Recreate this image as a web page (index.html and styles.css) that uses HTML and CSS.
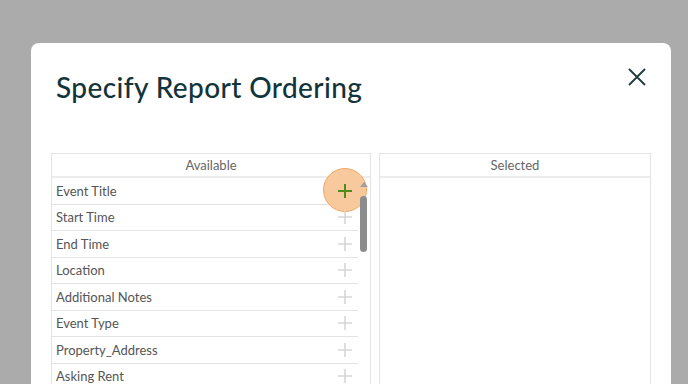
FILE: index.html
```html
<!DOCTYPE html>
<html lang="en">
<head>
  <meta charset="UTF-8" />
  <title>Specify Report Ordering</title>
  <link rel="stylesheet" href="styles.css">
</head>
<body>

<div class="modal">
  <div class="modal-head">
    <h1>Specify Report Ordering</h1>
    <button class="close" aria-label="Close">
      <svg width="18" height="18" viewBox="0 0 18 18"><path d="M1 1L17 17M17 1L1 17" stroke="#1f3a3d" stroke-width="1.8" fill="none"/></svg>
    </button>
  </div>

  <div class="lists">
    <div class="panel available">
      <div class="panel-head">Available</div>
      <div class="panel-body">
        <ul class="items">
          <li><span>Event Title</span><span class="add active"><span class="ring"></span><svg width="14" height="14" viewBox="0 0 14 14"><path d="M7 0V14M0 7H14" stroke="#4f8a1c" stroke-width="2"/></svg></span></li>
          <li><span>Start Time</span><span class="add"><svg width="14" height="14" viewBox="0 0 14 14"><path d="M7 0V14M0 7H14" stroke="#d6d6d6" stroke-width="1.6"/></svg></span></li>
          <li><span>End Time</span><span class="add"><svg width="14" height="14" viewBox="0 0 14 14"><path d="M7 0V14M0 7H14" stroke="#d6d6d6" stroke-width="1.6"/></svg></span></li>
          <li><span>Location</span><span class="add"><svg width="14" height="14" viewBox="0 0 14 14"><path d="M7 0V14M0 7H14" stroke="#d6d6d6" stroke-width="1.6"/></svg></span></li>
          <li><span>Additional Notes</span><span class="add"><svg width="14" height="14" viewBox="0 0 14 14"><path d="M7 0V14M0 7H14" stroke="#d6d6d6" stroke-width="1.6"/></svg></span></li>
          <li><span>Event Type</span><span class="add"><svg width="14" height="14" viewBox="0 0 14 14"><path d="M7 0V14M0 7H14" stroke="#d6d6d6" stroke-width="1.6"/></svg></span></li>
          <li><span>Property_Address</span><span class="add"><svg width="14" height="14" viewBox="0 0 14 14"><path d="M7 0V14M0 7H14" stroke="#d6d6d6" stroke-width="1.6"/></svg></span></li>
          <li><span>Asking Rent</span><span class="add"><svg width="14" height="14" viewBox="0 0 14 14"><path d="M7 0V14M0 7H14" stroke="#d6d6d6" stroke-width="1.6"/></svg></span></li>
        </ul>
        <div class="scrollbar">
          <span class="arrow"></span>
          <span class="thumb"></span>
        </div>
      </div>
    </div>

    <div class="panel selected">
      <div class="panel-head">Selected</div>
      <div class="panel-body"></div>
    </div>
  </div>
</div>

</body>
</html>
```

FILE: styles.css
```css
html, body {
  margin: 0;
  height: 100%;
  overflow: hidden;
}
body {
  background: #ababab;
  font-family: Lato, "Liberation Sans", sans-serif;
  padding: 43px 17px 0 31px;
}
.modal {
  width: 640px;
  height: 400px;
  background: #fff;
  border-radius: 8px 8px 0 0;
  box-sizing: border-box;
  padding: 0 20px;
}
.modal-head {
  display: flex;
  justify-content: space-between;
  align-items: flex-start;
  height: 110px;
}
.modal-head h1 {
  margin: 27px 0 0 5px;
  font-family: Lato, sans-serif;
  font-weight: 500;
  font-size: 28px;
  letter-spacing: 0.4px;
  color: #12343a;
}
.close {
  border: none;
  background: none;
  padding: 0;
  margin: 25px 5px 0 0;
  cursor: pointer;
}
.lists {
  display: flex;
  gap: 8px;
}
.panel {
  border: 1px solid #e3e3e3;
  border-bottom: none;
  height: 240px;
  box-sizing: border-box;
}
.available {
  width: 320px;
}
.selected {
  width: 272px;
}
.panel-head {
  height: 22px;
  line-height: 22px;
  text-align: center;
  font-size: 13px;
  color: #666;
  border-bottom: 2px solid #ececec;
}
.panel-body {
  display: flex;
}
.items {
  list-style: none;
  margin: 0;
  padding: 0;
  flex: 1;
}
.items li {
  display: flex;
  justify-content: space-between;
  align-items: center;
  height: 26.5px;
  box-sizing: border-box;
  border-bottom: 1px solid #e3e3e3;
  padding: 0 4px 0 4px;
  font-size: 13px;
  color: #555;
}
.add {
  position: relative;
  width: 14px;
  height: 14px;
  margin-right: 2px;
}
.add svg {
  position: relative;
  display: block;
}
.ring {
  position: absolute;
  left: -15px;
  top: -16px;
  width: 44px;
  height: 44px;
  border-radius: 50%;
  background: #f9c99e;
  border: 1px solid #f1a866;
  box-sizing: border-box;
}
.scrollbar {
  width: 12px;
  position: relative;
}
.arrow {
  position: absolute;
  left: 2px;
  top: 4px;
  border-left: 4px solid transparent;
  border-right: 4px solid transparent;
  border-bottom: 5px solid #a0a0a0;
}
.thumb {
  position: absolute;
  left: 2px;
  top: 18px;
  width: 7px;
  height: 56px;
  border-radius: 4px;
  background: #8c8c8c;
}
```
